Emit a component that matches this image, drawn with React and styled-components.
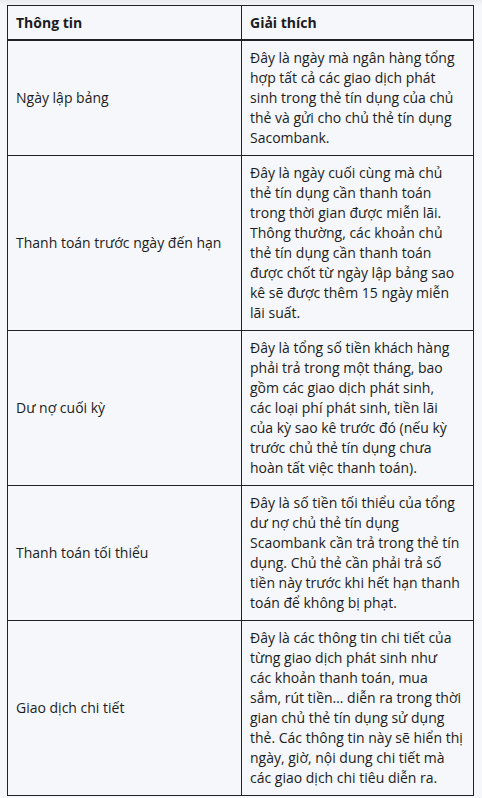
import React from 'react';
import styled, { createGlobalStyle } from 'styled-components';

const GlobalStyle = createGlobalStyle`
  html, body {
    margin: 0;
    padding: 0;
    background: #f5f7fa;
  }
  body {
    font-family: 'Open Sans', 'Noto Sans', sans-serif;
    color: #1c1c22;
  }
`;

const Page = styled.div`
  padding: 5px 8px 6px 7px;
  background: linear-gradient(#e9ebef 0, #f5f7fa 6px);
`;

const Table = styled.table`
  width: 467px;
  border-collapse: collapse;
  table-layout: fixed;
  font-size: 14px;
  line-height: 20px;
`;

const HeadCell = styled.th`
  text-align: left;
  font-weight: 700;
  padding: 7px 8px 6px;
  border: 1px solid #222226;
  border-bottom: 2px solid #222226;
  width: ${p => p.$w || 'auto'};
`;

const Cell = styled.td`
  padding: 7px 8px;
  border: 1px solid #222226;
  vertical-align: middle;
`;

const Line = styled.span`
  display: block;
  white-space: nowrap;
`;

// line breaks kept as in the source table
const rows = [
  {
    name: 'Ngày lập bảng',
    desc: [
      'Đây là ngày mà ngân hàng tổng',
      'hợp tất cả các giao dịch phát',
      'sinh trong thẻ tín dụng của chủ',
      'thẻ và gửi cho chủ thẻ tín dụng',
      'Sacombank.',
    ],
  },
  {
    name: 'Thanh toán trước ngày đến hạn',
    desc: [
      'Đây là ngày cuối cùng mà chủ',
      'thẻ tín dụng cần thanh toán',
      'trong thời gian được miễn lãi.',
      'Thông thường, các khoản chủ',
      'thẻ tín dụng cần thanh toán',
      'được chốt từ ngày lập bảng sao',
      'kê sẽ được thêm 15 ngày miễn',
      'lãi suất.',
    ],
  },
  {
    name: 'Dư nợ cuối kỳ',
    desc: [
      'Đây là tổng số tiền khách hàng',
      'phải trả trong một tháng, bao',
      'gồm các giao dịch phát sinh,',
      'các loại phí phát sinh, tiền lãi',
      'của kỳ sao kê trước đó (nếu kỳ',
      'trước chủ thẻ tín dụng chưa',
      'hoàn tất việc thanh toán).',
    ],
  },
  {
    name: 'Thanh toán tối thiểu',
    desc: [
      'Đây là số tiền tối thiểu của tổng',
      'dư nợ chủ thẻ tín dụng',
      'Scaombank cần trả trong thẻ tín',
      'dụng. Chủ thẻ cần phải trả số',
      'tiền này trước khi hết hạn thanh',
      'toán để không bị phạt.',
    ],
  },
  {
    name: 'Giao dịch chi tiết',
    desc: [
      'Đây là các thông tin chi tiết của',
      'từng giao dịch phát sinh như',
      'các khoản thanh toán, mua',
      'sắm, rút tiền… diễn ra trong thời',
      'gian chủ thẻ tín dụng sử dụng',
      'thẻ. Các thông tin này sẽ hiển thị',
      'ngày, giờ, nội dung chi tiết mà',
      'các giao dịch chi tiêu diễn ra.',
    ],
  },
];

export default function App() {
  return (
    <Page>
      <GlobalStyle />
      <Table>
        <thead>
          <tr>
            <HeadCell $w="217px">Thông tin</HeadCell>
            <HeadCell>Giải thích</HeadCell>
          </tr>
        </thead>
        <tbody>
          {rows.map(r => (
            <tr key={r.name}>
              <Cell>{r.name}</Cell>
              <Cell>
                {r.desc.map(l => (
                  <Line key={l}>{l}</Line>
                ))}
              </Cell>
            </tr>
          ))}
        </tbody>
      </Table>
    </Page>
  );
}
